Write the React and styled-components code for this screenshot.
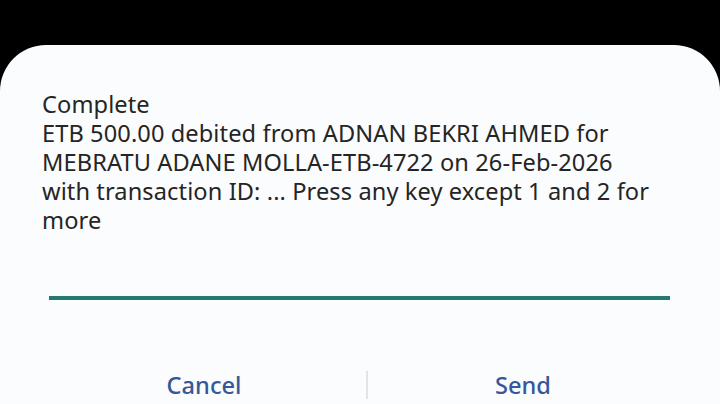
import React from "react";
import styled, { createGlobalStyle } from "styled-components";

const Global = createGlobalStyle`
  html, body {
    margin: 0;
    padding: 0;
    background: #000;
    width: 720px;
    height: 404px;
    overflow: hidden;
  }
`;

const Screen = styled.div`
  width: 720px;
  height: 404px;
  padding-top: 45px;
  box-sizing: border-box;
  background: #000;
`;

const Dialog = styled.div`
  height: 100%;
  background: #fbfcfd;
  border-radius: 46px 46px 0 0;
  padding: 45px 42px 0;
  box-sizing: border-box;
  display: flex;
  flex-direction: column;
  font-family: "Noto Sans", sans-serif;
`;

const Message = styled.div`
  font-size: 23.6px;
  line-height: 29px;
  color: #252525;
  white-space: nowrap;
  letter-spacing: 0.1px;
`;

const Input = styled.div`
  margin: 61px 8px 0 7px;
  height: 4px;
  background: #25796f;
`;

const Actions = styled.div`
  display: flex;
  align-items: center;
  margin-top: 70px;
  height: 30px;
`;

const Action = styled.button`
  flex: ${(p) => (p.$fixed ? "0 0 324px" : "1")};
  background: none;
  border: none;
  padding: 0;
  font-family: "Noto Sans", sans-serif;
  font-size: 23.6px;
  font-weight: 500;
  color: #36579a;
`;

const Divider = styled.div`
  width: 2px;
  height: 28px;
  background: #e4e4e4;
`;

export default function App() {
  return (
    <>
      <Global />
      <Screen>
        <Dialog>
          <Message>
            Complete
            <br />
            ETB 500.00 debited from ADNAN BEKRI AHMED for
            <br />
            MEBRATU ADANE MOLLA-ETB-4722 on 26-Feb-2026
            <br />
            with transaction ID: ... Press any key except 1 and 2 for
            <br />
            more
          </Message>
          <Input />
          <Actions>
            <Action $fixed>Cancel</Action>
            <Divider />
            <Action>Send</Action>
          </Actions>
        </Dialog>
      </Screen>
    </>
  );
}
